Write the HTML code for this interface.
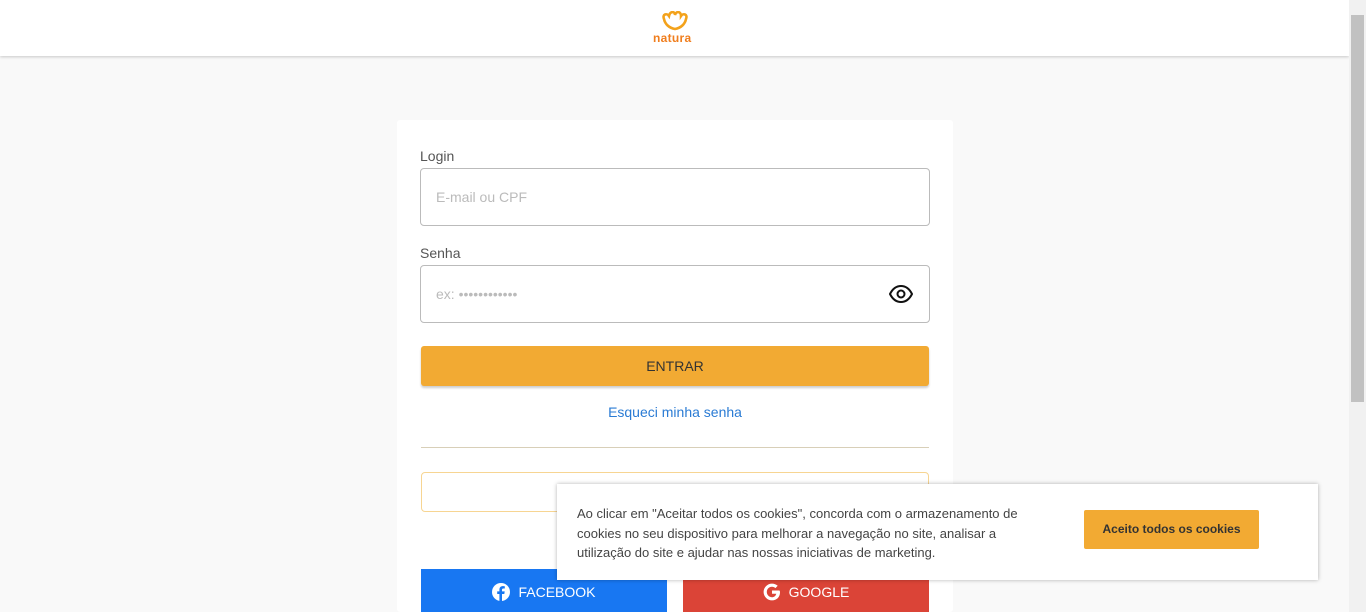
<!DOCTYPE html>
<html style="width:1366px;height:612px;overflow:hidden"><head><meta charset="utf-8"><style>
*{box-sizing:border-box;margin:0;padding:0}
body{width:1366px;height:612px;overflow:hidden;background:#f9f9f9;font-family:"Liberation Sans",Roboto,Arial,sans-serif;position:relative}
.hdr{position:absolute;left:0;top:0;width:1349px;height:56px;background:#fff;box-shadow:0 1px 3px rgba(0,0,0,.2)}
.sb{position:absolute;left:1349px;top:0;width:17px;height:612px;background:#f1f1f1}
.thumb{position:absolute;left:2px;top:15px;width:13px;height:387px;background:#c1c1c1}
.card{position:absolute;left:397px;top:120px;width:556px;height:492px;background:#fff;border-radius:3px;overflow:hidden}
.lbl{position:absolute;left:23px;font-size:14px;color:#555}
.inp{position:absolute;left:23px;width:510px;height:58px;border:1px solid #bbb;border-radius:4px;font-size:14px;color:#bbb;padding:20px 15px}
.btn{position:absolute;left:24px;top:226px;width:508px;height:40px;background:#f2aa33;border-radius:3px;box-shadow:0 2px 2px rgba(0,0,0,.2);text-align:center;line-height:40px;font-size:14px;color:#333}
.link{position:absolute;left:0;width:556px;top:284px;text-align:center;font-size:14px;color:#2a7bd4}
.hr{position:absolute;left:24px;top:327px;width:508px;height:1px;background:#d8cfb8}
.ob{position:absolute;left:24px;top:352px;width:508px;height:40px;border:1px solid #f7d592;border-radius:4px}
.soc{position:absolute;top:449px;width:246px;height:50px;color:#fff;font-size:14px;display:flex;align-items:center;justify-content:center;gap:8px;padding-bottom:4px}
.ck{position:absolute;left:557px;top:484px;width:761px;height:96px;background:#fff;box-shadow:0 0 4px rgba(0,0,0,.3)}
.ck p{position:absolute;left:20px;top:20px;white-space:nowrap;font-size:13px;line-height:19.5px;color:#444}
.ckb{position:absolute;left:527px;top:26px;width:175px;height:39px;background:#f2aa33;border-radius:2px;font-size:12px;font-weight:bold;color:#333;text-align:center;line-height:39px}
</style></head><body>
<div class="hdr">
<svg style="position:absolute;left:660px;top:11px" width="30" height="22" viewBox="0 0 30 22"><path d="M4 8 C2 3,7 2,9 5 C10 0,15 0,15 4 C16 0,21 0,21 5 C23 2,28 3,26 8 C25 13,21 17,15 18 C9 17,5 13,4 8Z" fill="none" stroke="#f3a21b" stroke-width="2.6"/></svg>
<div style="position:absolute;left:653px;top:31px;font-size:12px;font-weight:bold;color:#f07e1e;letter-spacing:.3px">natura</div>
</div>
<div class="sb"><div class="thumb"></div></div>
<div class="card">
<div class="lbl" style="top:28px">Login</div>
<div class="inp" style="top:48px">E-mail ou CPF</div>
<div class="lbl" style="top:125px">Senha</div>
<div class="inp" style="top:145px">ex: ••••••••••••
<svg style="position:absolute;right:16px;top:19px" width="24" height="18" viewBox="0 0 24 18"><path d="M1 9C4 3,8 1,12 1S20 3,23 9C20 15,16 17,12 17S4 15,1 9Z" fill="none" stroke="#111" stroke-width="2"/><circle cx="12" cy="9" r="3.5" fill="none" stroke="#111" stroke-width="2"/></svg></div>
<div class="btn">ENTRAR</div>
<div class="link">Esqueci minha senha</div>
<div class="hr"></div>
<div class="ob"></div>
<div class="soc" style="left:24px;background:#1877f2"><svg width="18" height="18" viewBox="0 0 18 18"><circle cx="9" cy="9" r="9" fill="#fff"/><path d="M10 18V11h2.3l.4-2.6H10V6.8c0-.8.3-1.3 1.4-1.3h1.4V3.2c-.3 0-1.1-.1-2-.1-2 0-3.4 1.2-3.4 3.5v1.8H5.2V11h2.2v7z" fill="#1877f2"/></svg>FACEBOOK</div>
<div class="soc" style="left:286px;background:#db4437"><svg width="18" height="18" viewBox="0 0 18 18"><path d="M16.5 7.5H9v3.2h4.3C12.7 13 11 14.2 9 14.2 6.1 14.2 3.8 11.9 3.8 9S6.1 3.8 9 3.8c1.3 0 2.5.5 3.4 1.3l2.3-2.3C13.2 1.4 11.2.6 9 .6 4.4.6.6 4.4.6 9s3.8 8.4 8.4 8.4c4.8 0 8-3.4 8-8.1 0-.6-.1-1.2-.5-1.8z" fill="#fff"/></svg>GOOGLE</div>
</div>
<div class="ck"><p>Ao clicar em "Aceitar todos os cookies", concorda com o armazenamento de<br>cookies no seu dispositivo para melhorar a navegação no site, analisar a<br>utilização do site e ajudar nas nossas iniciativas de marketing.</p><div class="ckb">Aceito todos os cookies</div></div>
</body></html>
